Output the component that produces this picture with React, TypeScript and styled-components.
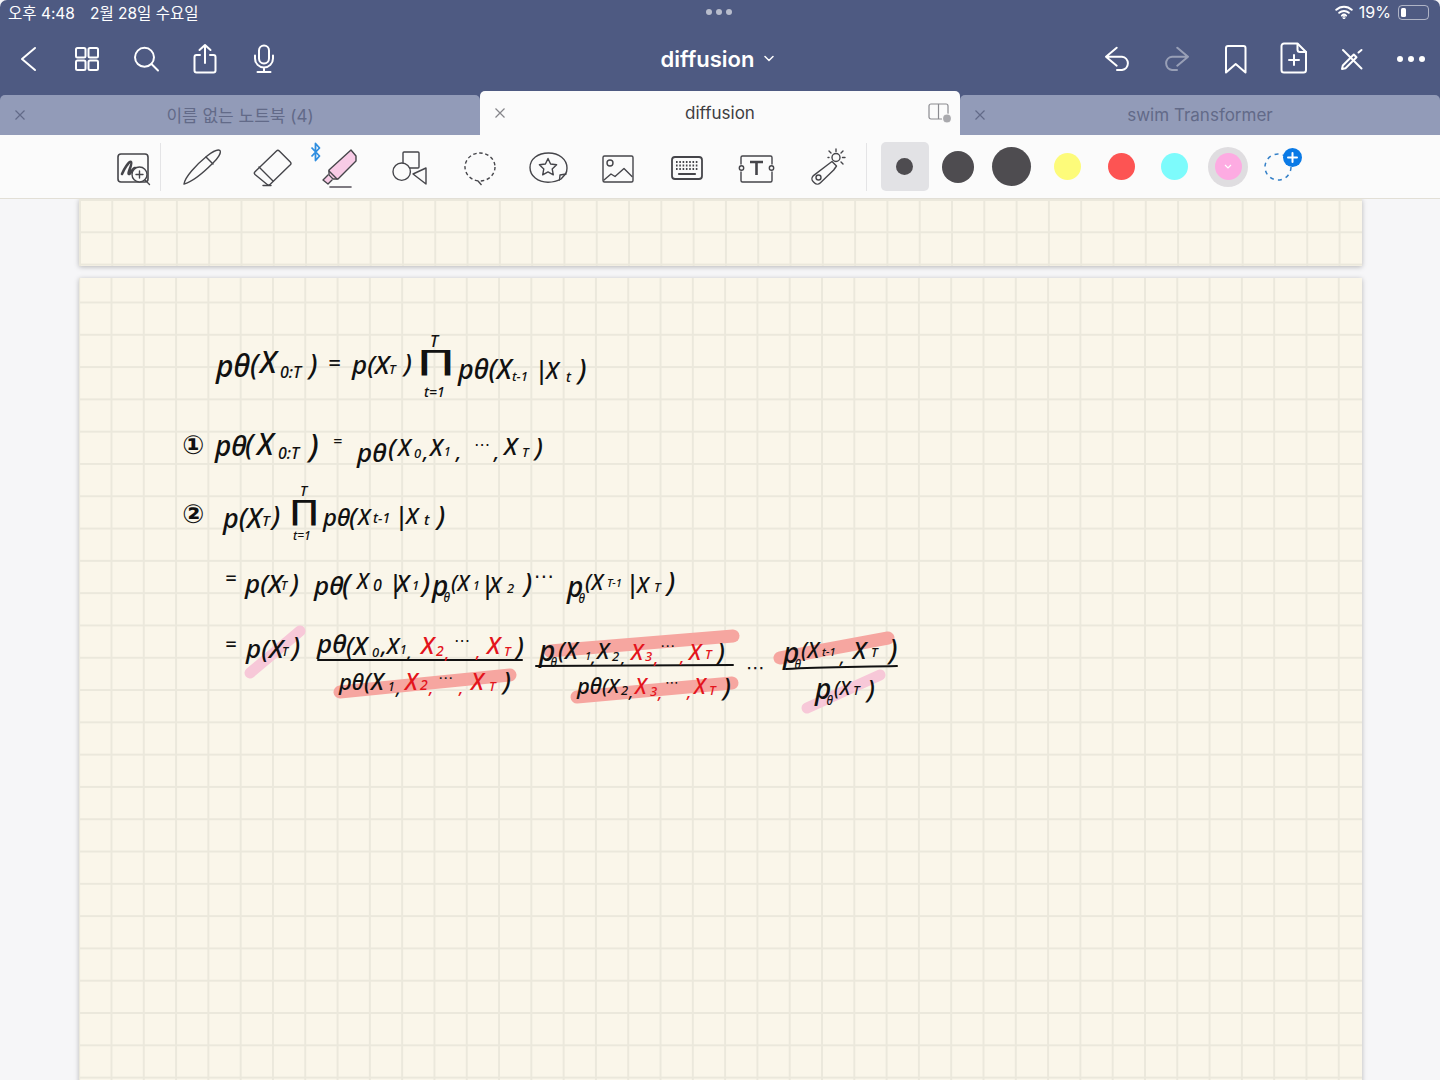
import React from 'react';
import styled, { createGlobalStyle } from 'styled-components';

const GlobalStyle = createGlobalStyle`
  html, body {
    margin: 0;
    padding: 0;
    background: #ffffff;
    overflow: hidden;
  }
  * {
    box-sizing: border-box;
  }
`;

const uiFont = `Inter, 'Noto Sans CJK KR', 'Noto Sans', sans-serif`;

const Screen = styled.div`
  width: 1440px;
  height: 1080px;
  overflow: hidden;
  display: flex;
  flex-direction: column;
  background: #f6f6f8;
  font-family: ${uiFont};
`;

const Header = styled.header`
  height: 95px;
  flex: none;
  background: #4e5a82;
  border-radius: 7px 7px 0 0;
  color: #ffffff;
`;

const StatusBar = styled.div`
  height: 25px;
  display: grid;
  grid-template-columns: 1fr auto 1fr;
  align-items: center;
  padding: 0 11px 1px 8px;
  font-size: 15.5px;
`;

const StatusLeft = styled.div`
  display: flex;
  gap: 15px;
`;

const Handle = styled.div`
  display: flex;
  gap: 4px;
`;

const HandleDot = styled.span`
  width: 6px;
  height: 6px;
  border-radius: 50%;
  background: rgba(255, 255, 255, 0.6);
`;

const StatusRight = styled.div`
  display: flex;
  justify-content: flex-end;
  align-items: center;
  gap: 6px;
  font-size: 16px;
`;

const Battery = styled.div`
  width: 31px;
  height: 15px;
  border: 1px solid rgba(255, 255, 255, 0.55);
  border-radius: 4px;
  padding: 2px;
  margin-left: 1px;
`;

const BatteryLevel = styled.div`
  width: 19%;
  min-width: 5px;
  height: 100%;
  background: #ffffff;
  border-radius: 1.5px;
`;

const NavRow = styled.nav`
  height: 70px;
  display: grid;
  grid-template-columns: 1fr auto 1fr;
  align-items: center;
  padding-bottom: 3px;
`;

const NavGroup = styled.div<{ $end?: boolean }>`
  display: flex;
  justify-content: ${(p) => (p.$end ? 'flex-end' : 'flex-start')};
  margin-left: ${(p) => (p.$end ? '0' : '-1.5px')};
`;

const NavButton = styled.button<{ $dim?: boolean; $tight?: boolean }>`
  width: ${(p) => (p.$tight ? '58.6px' : '59px')};
  height: 36px;
  padding: 0;
  border: none;
  background: none;
  color: #ffffff;
  opacity: ${(p) => (p.$dim ? 0.42 : 1)};
  display: flex;
  align-items: center;
  justify-content: center;
`;

const NavIcon = styled.svg.attrs({
  width: 36,
  height: 36,
  viewBox: '0 0 36 36',
  fill: 'none',
  stroke: 'currentColor',
  strokeWidth: 2,
  strokeLinecap: 'round',
  strokeLinejoin: 'round',
})``;

const Title = styled.div`
  display: flex;
  align-items: center;
  gap: 10px;
  font-size: 22px;
  font-weight: 600;
  margin-left: -5px;
`;

const TabStrip = styled.div`
  height: 40px;
  flex: none;
  display: grid;
  grid-template-columns: repeat(3, 480px);
  background: #4e5a82;
`;

const Tab = styled.div<{ $active?: boolean }>`
  display: grid;
  grid-template-columns: 40px 1fr 40px;
  align-items: center;
  justify-items: center;
  position: relative;
  font-size: 17px;
  padding-bottom: ${(p) => (p.$active ? '0' : '1px')};
  border-radius: 5px 5px 0 0;
  background: ${(p) => (p.$active ? '#fbfbfb' : '#929bb8')};
  color: ${(p) => (p.$active ? '#3e3e42' : '#626a88')};
  height: ${(p) => (p.$active ? '44px' : '40px')};
  margin-top: ${(p) => (p.$active ? '-4px' : '0')};
`;

const TabClose = styled.svg.attrs<{ $active?: boolean }>({
  width: 12,
  height: 12,
  viewBox: '0 0 12 12',
  fill: 'none',
  strokeWidth: 1.2,
})<{ $active?: boolean }>`
  stroke: ${(p) => (p.$active ? '#85858a' : '#626a88')};
`;

const ToolRow = styled.div`
  height: 64px;
  flex: none;
  display: flex;
  align-items: center;
  padding-left: 98.3px;
  background: #fbfbfb;
  border-bottom: 1px solid #e2dfd6;
  color: #45454a;
`;

const Tool = styled.div`
  width: 69.4px;
  height: 48px;
  flex: none;
  display: flex;
  align-items: center;
  justify-content: center;
  position: relative;
`;

const ToolIcon = styled.svg.attrs({
  width: 48,
  height: 48,
  viewBox: '0 0 48 48',
  fill: 'none',
  stroke: 'currentColor',
  strokeWidth: 1.4,
  strokeLinecap: 'round',
  strokeLinejoin: 'round',
})`
  overflow: visible;
`;

const Separator = styled.div<{ $before: number; $after: number }>`
  width: 1px;
  height: 48px;
  flex: none;
  background: #e4e4e6;
  margin-left: ${(p) => p.$before}px;
  margin-right: ${(p) => p.$after}px;
`;

const BluetoothBadge = styled.svg.attrs({
  width: 12,
  height: 20,
  viewBox: '0 0 12 20',
  fill: 'none',
  stroke: '#2f8ee0',
  strokeWidth: 1.8,
  strokeLinejoin: 'round',
})`
  position: absolute;
  left: 5px;
  top: -1px;
`;

const Slot = styled.div<{ $selected?: boolean; $shift?: number }>`
  width: 53.5px;
  height: 49px;
  flex: none;
  margin-left: ${(p) => p.$shift ?? 0}px;
  display: flex;
  align-items: center;
  justify-content: center;
  position: relative;
  &::before {
    content: '';
    display: ${(p) => (p.$selected ? 'block' : 'none')};
    position: absolute;
    inset: 0 2.5px;
    border-radius: 5px;
    background: #e2e2e5;
  }
`;

const Dot = styled.span<{ $size: number; $color: string }>`
  width: ${(p) => p.$size}px;
  height: ${(p) => p.$size}px;
  border-radius: 50%;
  background: ${(p) => p.$color};
  position: relative;
  display: flex;
  align-items: center;
  justify-content: center;
`;

const Ring = styled.span`
  width: 40px;
  height: 40px;
  border-radius: 50%;
  background: #dfdde0;
  display: flex;
  align-items: center;
  justify-content: center;
`;

const AddColor = styled.span`
  width: 30px;
  height: 28px;
  position: relative;
  display: flex;
`;

const AddBadge = styled.span`
  position: absolute;
  top: -5px;
  right: -9px;
  width: 19px;
  height: 19px;
  border-radius: 50%;
  background: #0a7ae6;
  display: flex;
  align-items: center;
  justify-content: center;
`;

const Canvas = styled.main`
  flex: 1;
  min-height: 0;
  overflow: hidden;
  display: flex;
  flex-direction: column;
  gap: 12px;
  padding: 0 78px 0 79px;
`;

const Page = styled.section<{ $height: number; $gridY: string }>`
  flex: none;
  height: ${(p) => p.$height}px;
  position: relative;
  background-color: #faf6ea;
  background-image: linear-gradient(to right, #ebe8dc 2px, transparent 2px),
    linear-gradient(to bottom, #ebe8dc 2px, transparent 2px);
  background-size: 32.3px 32.3px;
  background-position: 31.5px ${(p) => p.$gridY};
  box-shadow: 0 1px 5px rgba(0, 0, 0, 0.26);
`;

const InkCanvas = styled.svg`
  position: absolute;
  left: 0;
  top: 0;
`;

const Ink = styled.span<{ $x: number; $y: number; $size: number; $red?: boolean; $up?: boolean }>`
  position: absolute;
  left: ${(p) => p.$x - 79}px;
  top: ${(p) => p.$y - 278}px;
  height: 0;
  line-height: 0;
  white-space: nowrap;
  font-family: 'Noto Sans', 'DejaVu Sans', sans-serif;
  font-style: ${(p) => (p.$up ? 'normal' : 'italic')};
  font-weight: 500;
  font-size: ${(p) => p.$size}px;
  color: ${(p) => (p.$red ? '#e3141c' : '#111111')};
`;

const InkNumber = styled(Ink)`
  font-family: 'DejaVu Sans', sans-serif;
  font-weight: 700;
`;

const Product = styled(Ink)<{ $stretch: number }>`
  font-family: 'DejaVu Sans', sans-serif;
  font-weight: 400;
  transform: scaleX(${(p) => p.$stretch});
  transform-origin: left center;
`;

const SubTheta = styled.span`
  font-size: 0.42em;
  margin-left: -0.42em;
  position: relative;
  top: 0.5em;
`;

type Stroke = [string, number, number, number, boolean?, boolean?];

const inkTokens: Stroke[] = [
  // first formula
  ['pθ', 216, 366, 30],
  ['(', 250, 364, 28],
  ['X', 260, 362, 30],
  ['0:T', 280, 372, 16],
  [')', 309, 364, 28],
  ['=', 328, 362, 22],
  ['p(X', 352, 364, 26],
  ['T', 389, 369, 13],
  [')', 404, 362, 26],
  ['T', 430, 341, 16],
  ['t=1', 424, 392, 14],
  ['pθ(X', 458, 369, 27],
  ['t-1', 512, 376, 13],
  ['|', 534, 369, 26],
  ['X', 546, 370, 23],
  ['t', 566, 377, 14],
  [')', 578, 369, 28],
  // line 1
  ['pθ', 215, 445, 28],
  ['(', 245, 444, 28],
  ['X', 257, 444, 30],
  ['0:T', 278, 453, 16],
  [')', 309, 445, 32],
  ['=', 333, 441, 16],
  ['pθ', 357, 452, 26],
  ['(', 388, 447, 26],
  ['X', 398, 447, 23],
  ['0', 414, 453, 13],
  [',', 423, 452, 20],
  ['X', 430, 447, 23],
  ['1', 444, 452, 12],
  [',', 456, 452, 20],
  ['⋯', 474, 444, 16, false, true],
  [',', 494, 452, 20],
  ['X', 504, 446, 24],
  ['T', 522, 452, 13],
  [')', 535, 446, 26],
  // line 2
  ['p(X', 223, 518, 27],
  ['T', 262, 520, 15],
  [')', 272, 516, 27],
  ['T', 300, 491, 14],
  ['t=1', 293, 536, 12],
  ['pθ', 323, 517, 24],
  ['(', 349, 516, 26],
  ['X', 358, 516, 22],
  ['t-1', 373, 518, 14],
  ['|', 394, 515, 26],
  ['X', 406, 515, 22],
  ['t', 424, 519, 15],
  [')', 437, 516, 27],
  // line 3
  ['=', 225, 578, 20],
  ['p(X', 245, 583, 26],
  ['T', 281, 586, 12],
  [')', 291, 582, 26],
  ['pθ', 314, 585, 26],
  ['(', 342, 584, 28],
  ['X', 357, 581, 21],
  ['0', 373, 585, 16],
  ['|', 388, 583, 26],
  ['X', 396, 583, 24],
  ['1', 412, 585, 13],
  [')', 422, 583, 27],
  ['p_', 432, 585, 28],
  ['(X', 451, 583, 21],
  ['1', 473, 586, 12],
  ['|', 480, 584, 26],
  ['X', 489, 584, 22],
  ['2', 507, 588, 13],
  [')', 524, 583, 27],
  ['⋯', 534, 576, 20, false, true],
  ['p_', 567, 586, 28],
  ['(X', 585, 582, 21],
  ['T-1', 607, 583, 11],
  ['|', 625, 583, 26],
  ['X', 637, 585, 21],
  ['T', 654, 587, 13],
  [')', 667, 582, 27],
  // line 4, first fraction
  ['=', 225, 644, 20],
  ['p(X', 246, 648, 26],
  ['T', 282, 652, 12],
  [')', 292, 647, 27],
  ['pθ', 317, 643, 26],
  ['(X', 346, 645, 25],
  ['0', 372, 652, 13],
  [',X', 381, 645, 22],
  ['1', 400, 650, 12],
  [',', 407, 652, 18],
  ['X', 421, 645, 24, true],
  ['2', 436, 651, 14, true],
  [',', 445, 653, 16, true],
  ['⋯', 454, 640, 16, false, true],
  [',', 476, 652, 16, true],
  ['X', 487, 645, 24, true],
  ['T', 504, 651, 13, true],
  [')', 516, 645, 26],
  ['pθ', 339, 681, 22],
  ['(X', 364, 681, 23],
  ['1', 388, 687, 12],
  [',', 396, 688, 18],
  ['X', 405, 681, 23, true],
  ['2', 420, 685, 14, true],
  [',', 429, 688, 16, true],
  ['⋯', 438, 677, 15, false, true],
  [',', 459, 688, 16, true],
  ['X', 471, 681, 23, true],
  ['T', 489, 686, 13, true],
  [')', 503, 680, 26],
  // second fraction
  ['p_', 539, 650, 28],
  ['(X', 558, 650, 23],
  ['1', 585, 656, 11],
  [',', 591, 657, 18],
  ['X', 597, 650, 22],
  ['2', 612, 656, 13],
  [',', 621, 658, 16],
  ['X', 631, 651, 22, true],
  ['3', 645, 656, 13, true],
  [',', 654, 658, 16, true],
  ['⋯', 660, 645, 15, false, true],
  [',', 680, 657, 16, true],
  ['X', 689, 651, 22, true],
  ['T', 705, 654, 13, true],
  [')', 717, 651, 26],
  ['pθ', 577, 685, 22],
  ['(X', 602, 686, 20],
  ['2', 621, 690, 13],
  [',', 629, 692, 16],
  ['X', 635, 686, 21, true],
  ['3', 650, 691, 13, true],
  [',', 658, 693, 16, true],
  ['⋯', 665, 682, 14, false, true],
  [',', 687, 692, 16, true],
  ['X', 694, 686, 21, true],
  ['T', 709, 690, 13, true],
  [')', 723, 686, 26],
  ['⋯', 746, 667, 19, false, true],
  // third fraction
  ['p_', 783, 652, 28],
  ['(X', 801, 650, 21],
  ['t-1', 822, 652, 11],
  [',', 840, 657, 18],
  ['X', 853, 650, 24],
  ['T', 871, 652, 13],
  [')', 889, 649, 28],
  ['p_', 815, 688, 28],
  ['(X', 834, 688, 19],
  ['T', 853, 690, 13],
  [')', 867, 688, 26],
];

function Wifi() {
  return (
    <svg width="18" height="14" viewBox="0 0 18 14" fill="none" stroke="#fff" strokeWidth="2" strokeLinecap="round">
      <path d="M1.3 4.8a11 11 0 0 1 15.4 0" />
      <path d="M4.2 7.8a7 7 0 0 1 9.6 0" />
      <path d="M6.9 10.6a3 3 0 0 1 4.2 0" />
      <circle cx="9" cy="12.6" r="0.5" />
    </svg>
  );
}

function Close({ active }: { active?: boolean }) {
  return (
    <TabClose $active={active}>
      <path d="M1.5 1.5l9 9M10.5 1.5l-9 9" />
    </TabClose>
  );
}

export default function App() {
  return (
    <Screen>
      <GlobalStyle />
      <Header>
        <StatusBar>
          <StatusLeft>
            <span>오후 4:48</span>
            <span>2월 28일 수요일</span>
          </StatusLeft>
          <Handle>
            <HandleDot />
            <HandleDot />
            <HandleDot />
          </Handle>
          <StatusRight>
            <Wifi />
            <span>19%</span>
            <Battery>
              <BatteryLevel />
            </Battery>
          </StatusRight>
        </StatusBar>
        <NavRow>
          <NavGroup>
            <NavButton>
              <NavIcon><path d="M25 7L12 18l13 11" /></NavIcon>
            </NavButton>
            <NavButton>
              <NavIcon>
                <rect x="7" y="7" width="9.5" height="9.5" rx="1.5" />
                <rect x="19.5" y="7" width="9.5" height="9.5" rx="1.5" />
                <rect x="7" y="19.5" width="9.5" height="9.5" rx="1.5" />
                <rect x="19.5" y="19.5" width="9.5" height="9.5" rx="1.5" />
              </NavIcon>
            </NavButton>
            <NavButton>
              <NavIcon>
                <circle cx="16.500" cy="16.300" r="9.500" />
                <path d="M23.500 23l6.500 6.500" />
              </NavIcon>
            </NavButton>
            <NavButton>
              <NavIcon>
                <path d="M13 14H9.5a2 2 0 0 0-2 2v13.500a2 2 0 0 0 2 2h17a2 2 0 0 0 2-2V16a2 2 0 0 0-2-2H23" />
                <path d="M18 22V4M12.500 9L18 4l5.500 5" />
              </NavIcon>
            </NavButton>
            <NavButton>
              <NavIcon>
                <rect x="13" y="4.500" width="10" height="18" rx="5" />
                <path d="M9 14.500v3a9 9 0 0 0 18 0v-3M18 27v4M11.500 31h13" />
              </NavIcon>
            </NavButton>
          </NavGroup>
          <Title>
            diffusion
            <svg width="10" height="7" viewBox="0 0 10 7" fill="none" stroke="#fff" strokeWidth="1.5" strokeLinecap="round">
              <path d="M1 1.500l4 4 4-4" />
            </svg>
          </Title>
          <NavGroup $end>
            <NavButton $tight>
              <NavIcon>
                <path d="M16.700 6.700L6 15.700l10.700 9M6 15.700h16a6.700 6.700 0 0 1 0 13.300h-5" />
              </NavIcon>
            </NavButton>
            <NavButton $tight $dim>
              <NavIcon>
                <path d="M19.300 6.700L30 15.700l-10.700 9M30 15.700H14a6.700 6.700 0 0 0 0 13.300h5" />
              </NavIcon>
            </NavButton>
            <NavButton $tight>
              <NavIcon>
                <path d="M9 31.500V7a2 2 0 0 1 2-2h15.500a2 2 0 0 1 2 2v24.500L18.700 23z" />
              </NavIcon>
            </NavButton>
            <NavButton $tight>
              <NavIcon>
                <path d="M21.500 2.500H8a2.500 2.500 0 0 0-2.500 2.500v24a2.500 2.500 0 0 0 2.500 2.500h19.500a2.500 2.500 0 0 0 2.500-2.500V11z" />
                <path d="M21.500 3v5.500a2.500 2.500 0 0 0 2.500 2.500h6M18 14v10M13 19h10" />
              </NavIcon>
            </NavButton>
            <NavButton $tight>
              <NavIcon>
                <path d="M9 9l18.500 18.500" />
                <path d="M8 28l3.500-.8 11-11-2.700-2.700-11 11zM24.500 11.500l3-2.500" />
              </NavIcon>
            </NavButton>
            <NavButton $tight>
              <svg width="36" height="8" viewBox="0 0 36 8" fill="#fff">
                <circle cx="7" cy="4" r="3" />
                <circle cx="18" cy="4" r="3" />
                <circle cx="29" cy="4" r="3" />
              </svg>
            </NavButton>
          </NavGroup>
        </NavRow>
      </Header>

      <TabStrip>
        <Tab>
          <Close />
          <span>이름 없는 노트북 (4)</span>
        </Tab>
        <Tab $active>
          <Close active />
          <span>diffusion</span>
          <svg width="26" height="24" viewBox="0 0 26 24" fill="none" stroke="#8b8b90" strokeWidth="1.2">
            <rect x="2" y="3" width="19" height="15" rx="2" />
            <path d="M11.500 3v15" />
            <circle cx="20" cy="17.500" r="4.500" fill="#a9a9ad" stroke="#fbfbfb" />
          </svg>
        </Tab>
        <Tab>
          <Close />
          <span>swim Transformer</span>
        </Tab>
      </TabStrip>

      <ToolRow>
        <Tool>
          <ToolIcon>
            <g transform="translate(4 4)">
              <rect x="5" y="7" width="30" height="28" rx="3" strokeWidth="1.6" />
              <path d="M9 27c2-5 7-13 9-12s-4 12-2 12 4-7 6-6 0 6 4 3" strokeWidth="2.600" />
              <circle cx="26.500" cy="27.500" r="7.500" fill="#fbfbfb" />
              <path d="M26.500 24v7M23 27.500h7M32 33l4.500 4.500" />
            </g>
          </ToolIcon>
        </Tool>
        <Separator $before={-8} $after={6} />
        <Tool>
          <ToolIcon>
            <path d="M7 41c1-7 12-19 23-28 5-4 11-7 13-5.500 1.500 2.500-2.500 8.500-7 12.500C28 28 15 39 7 41z" />
            <path d="M29 14l7 7" />
          </ToolIcon>
        </Tool>
        <Tool>
          <ToolIcon>
            <path d="M29.500 8a2 2 0 0 1 2.800 0l11 11a2 2 0 0 1 0 2.800L23 41.500a2 2 0 0 1-2.800 0L8 31.500a2 2 0 0 1 0-2.800z" />
            <path d="M12 24l14 14M16 42.500h8" />
          </ToolIcon>
        </Tool>
        <Tool>
          <BluetoothBadge>
            <path d="M1.500 5.500l8 8.500L5.500 18.500v-17L9.500 6l-8 8.500" />
          </BluetoothBadge>
          <ToolIcon>
            <path d="M35 7l5 6 0 5-18 18-5 0-4-4 0-5z" fill="#f8cbe6" />
            <path d="M13 28l8 8M12 32l-5 5 5 4 4-4" fill="#f8cbe6" />
            <path d="M14 44h21" stroke="#55505a" strokeWidth="1.600" />
          </ToolIcon>
        </Tool>
        <Tool>
          <ToolIcon>
            <rect x="17" y="9" width="16" height="16" rx="1" />
            <circle cx="15.700" cy="28.700" r="8.700" fill="#fbfbfb" />
            <path d="M27 31l13-6v16z" />
          </ToolIcon>
        </Tool>
        <Tool>
          <ToolIcon>
            <g strokeLinecap="butt">
              <ellipse cx="25" cy="24" rx="15" ry="14" strokeDasharray="3.500 2.600" />
              <path d="M23 38l3.500 4" />
            </g>
          </ToolIcon>
        </Tool>
        <Tool>
          <ToolIcon>
            <path d="M37 36c-4 2.300-8 3.200-13 3.200C14 39.200 6 33 6 24.500S14 10 24.500 10 43 16.500 43 25c0 2.500-.5 4.500-1.500 6z" />
            <path d="M42 31l-6 1-.5 5M24 15.500l2.600 5.500 6 .8-4.400 4.100 1.100 5.900-5.300-2.900-5.300 2.900 1.100-5.900-4.400-4.100 6-.8z" />
          </ToolIcon>
        </Tool>
        <Tool>
          <ToolIcon>
            <rect x="9" y="13" width="30" height="26" rx="1.500" />
            <circle cx="16" cy="20" r="3" />
            <path d="M10 37l7-6 4 2.500 9-8 3 3 5 5" />
          </ToolIcon>
        </Tool>
        <Tool>
          <ToolIcon>
            <rect x="9" y="14" width="30" height="22" rx="3" strokeWidth="1.800" />
            <path d="M13 19h22M13 22.500h22M13 26h22" strokeWidth="2" strokeDasharray="1.600 1.700" strokeLinecap="butt" />
            <path d="M16 31h16" strokeWidth="2.200" />
          </ToolIcon>
        </Tool>
        <Tool>
          <ToolIcon>
            <path d="M8 21v-6.500a1.500 1.500 0 0 1 1.500-1.500h28a1.500 1.500 0 0 1 1.500 1.500V21M39 29v8.500a1.500 1.500 0 0 1-1.500 1.500h-28A1.500 1.500 0 0 1 8 37.500V29" />
            <circle cx="8.500" cy="25" r="2.200" />
            <circle cx="38.500" cy="25" r="2.200" />
            <path d="M17 19h13M23.500 19v13" strokeWidth="2.600" strokeLinecap="butt" />
          </ToolIcon>
        </Tool>
        <Tool>
          <ToolIcon>
            <path d="M26 21.500l4-3 4.500 4.500-2.800 4-13.500 13a4 4 0 0 1-5.600 0l-1.500-1.500a4 4 0 0 1 0-5.600z" />
            <circle cx="16.500" cy="34.500" r="2.500" />
            <circle cx="34" cy="14.500" r="4" />
            <path d="M34 6v2.500M41 8l-2 2M43 14.500h-2.500M41 21l-2-2M27 8l2 2M26 14.500h1" />
          </ToolIcon>
        </Tool>
        <Separator $before={5.300} $after={11.300} />
        <Slot $selected><Dot $size={17} $color="#4e4c50" /></Slot>
        <Slot><Dot $size={32} $color="#4e4c50" /></Slot>
        <Slot><Dot $size={39} $color="#4e4c50" /></Slot>
        <Slot $shift={2.500}><Dot $size={27} $color="#fdfb7a" /></Slot>
        <Slot><Dot $size={27} $color="#fd5453" /></Slot>
        <Slot><Dot $size={27} $color="#7dfbfc" /></Slot>
        <Slot>
          <Ring>
            <Dot $size={27} $color="#fdabe2">
              <svg width="8" height="5" viewBox="0 0 8 5" fill="none" stroke="#fff" strokeWidth="1.200">
                <path d="M1 1l3 3 3-3" />
              </svg>
            </Dot>
          </Ring>
        </Slot>
        <Slot $shift={-3.500}>
          <AddColor>
            <svg width="30" height="28" viewBox="0 0 30 28" fill="none" stroke="#3480c8" strokeWidth="1.500">
              <circle cx="15" cy="14" r="13" strokeDasharray="4 4.200" />
            </svg>
            <AddBadge>
              <svg width="11" height="11" viewBox="0 0 11 11" stroke="#fff" strokeWidth="2" strokeLinecap="round">
                <path d="M5.500 1v9M1 5.500h9" />
              </svg>
            </AddBadge>
          </AddColor>
        </Slot>
      </ToolRow>

      <Canvas>
        <Page $height={67} $gridY="bottom 2.500px" />
        <Page $height={830} $gridY="23.500px">
          <InkCanvas width="1283" height="830" viewBox="79 278 1283 830" fill="none" strokeLinecap="round">
            <g stroke="#f6a6a0" strokeWidth="13">
              <path d="M340 692L510 675" />
              <path d="M550 651L733 636" />
              <path d="M577 697L732 683" />
              <path d="M780 658L888 638" />
            </g>
            <g stroke="#f7c8d8" strokeWidth="11">
              <path d="M250 673L300 631" />
              <path d="M807 708L880 675" />
            </g>
            <g stroke="#111" strokeWidth="2">
              <path d="M318 660L522 660" />
              <path d="M536 666L733 665" />
              <path d="M786 669C820 667 860 667 897 666" />
            </g>
          </InkCanvas>
          <InkNumber $x={182} $y={445} $size={26} $up>①</InkNumber>
          <InkNumber $x={182} $y={514} $size={26} $up>②</InkNumber>
          <Product $x={418} $y={361} $size={28} $stretch={1.7} $up>∏</Product>
          <Product $x={290} $y={511} $size={28} $stretch={1.35} $up>∏</Product>
          {inkTokens.map(([text, x, y, size, red, upright], i) => (
            <Ink key={i} $x={x} $y={y} $size={size} $red={red} $up={upright}>
              {text === 'p_' ? (
                <>
                  p<SubTheta>θ</SubTheta>
                </>
              ) : (
                text
              )}
            </Ink>
          ))}
        </Page>
      </Canvas>
    </Screen>
  );
}
